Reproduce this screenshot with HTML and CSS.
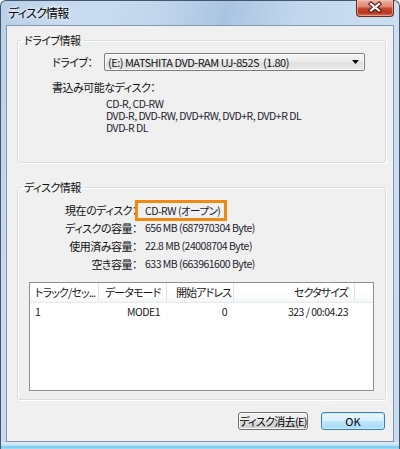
FILE: index.html
```html
<!DOCTYPE html>
<html lang="ja">
<head>
<meta charset="utf-8">
<title>ディスク情報</title>
<link rel="stylesheet" href="styles.css">
</head>
<body>
<div class="window">
  <div class="titlebar">
    <span class="title">ディスク情報</span>
    <div class="close">
      <svg width="38" height="17" viewBox="0 0 38 17">
        <path d="M15 5 L23 11.5 M23 5 L15 11.5" stroke="#5a1c12" stroke-width="4.4" stroke-linecap="square" fill="none"/>
        <path d="M15 5 L23 11.5 M23 5 L15 11.5" stroke="#ffffff" stroke-width="2.2" stroke-linecap="square" fill="none"/>
      </svg>
    </div>
  </div>
  <div class="client">
    <fieldset class="group g1">
      <legend>ドライブ情報</legend>
      <div class="drive-row">
        <span class="lbl">ドライブ：</span>
        <div class="combo">
          <span class="combo-text">(E:) MATSHITA DVD-RAM UJ-852S&nbsp;&nbsp;(1.80)</span>
          <svg class="combo-arrow" width="7" height="4" viewBox="0 0 7 4"><path d="M0 0 H7 L3.5 4 Z" fill="#000"/></svg>
        </div>
      </div>
      <div class="writable">書込み可能なディスク：</div>
      <div class="disc-list">
        <div>CD-R, CD-RW</div>
        <div>DVD-R, DVD-RW, DVD+RW, DVD+R, DVD+R DL</div>
        <div>DVD-R DL</div>
      </div>
    </fieldset>
    <fieldset class="group g2">
      <legend>ディスク情報</legend>
      <div class="info">
        <div class="k">現在のディスク：</div><div class="v"><span class="hl">CD-RW (オープン)</span></div>
        <div class="k">ディスクの容量：</div><div class="v">656 MB (687970304 Byte)</div>
        <div class="k">使用済み容量：</div><div class="v">22.8 MB (24008704 Byte)</div>
        <div class="k">空き容量：</div><div class="v">633 MB (663961600 Byte)</div>
      </div>
      <div class="listview">
        <div class="lv-head">
          <div class="c c1">トラック/セッ...</div>
          <div class="c c2 r">データモード</div>
          <div class="c c3">開始アドレス</div>
          <div class="c c4 r">セクタサイズ</div>
          <div class="c c5"></div>
        </div>
        <div class="lv-row">
          <div class="c c1">1</div>
          <div class="c c2 r">MODE1</div>
          <div class="c c3 r">0</div>
          <div class="c c4 r">323 / 00:04.23</div>
          <div class="c c5"></div>
        </div>
      </div>
    </fieldset>
    <div class="buttons">
      <button class="btn">ディスク消去(E)</button>
      <button class="btn ok">OK</button>
    </div>
  </div>
</div>
</body>
</html>
```
FILE: styles.css
```css
* { box-sizing: border-box; }
html, body { margin: 0; padding: 0; }
body {
  width: 400px;
  height: 449px;
  overflow: hidden;
  background: #fff;
  font-family: "Noto Sans CJK JP", "Noto Sans", sans-serif;
  font-feature-settings: "palt";
  font-size: 11px;
  letter-spacing: -0.5px;
  color: #1a1a1a;
}
.window {
  width: 400px;
  height: 449px;
  border: 1px solid #44566b;
  border-bottom: none;
  border-radius: 6px 6px 0 0;
  background:
    linear-gradient(to bottom, #d9e8f6 0, #cfe3f4 3px, #6fcbee 5px, #a9dcf2 7px) left bottom / 100% 7px no-repeat,
    linear-gradient(105deg, #b9d0e9 0%, #cadcf0 18%, #c0d5ec 32%, #a9c4e2 44%, #c2d7ed 58%, #cddff1 78%, #c8dbef 100%);
  display: flex;
  flex-direction: column;
  padding: 0 5px 7px 5px;
}
.titlebar {
  height: 24px;
  display: flex;
  justify-content: space-between;
  align-items: flex-start;
}
.title {
  padding-left: 2px;
  margin-top: 4px;
  font-size: 12px;
  line-height: 16px;
  letter-spacing: -0.8px;
  color: #000;
  text-shadow: 0 0 6px rgba(255,255,255,0.9), 0 0 3px rgba(255,255,255,0.9);
}
.close {
  width: 38px;
  height: 17px;
  margin-top: -1px;
  border: 1px solid #6a2a1e;
  border-top: none;
  border-radius: 0 0 4px 4px;
  background: linear-gradient(to bottom, #eab2a4 0%, #de8a76 40%, #c7492f 52%, #b7341c 78%, #d0705a 100%);
  box-shadow: inset 0 0 0 1px rgba(255,200,185,0.55);
  overflow: hidden;
}
.close svg { display: block; margin: -1px 0 0 -1px; }

.client {
  flex: 1;
  background: #f0f0f0;
  border: 1px solid #8499b0;
  padding: 7px 7px 0 10px;
  display: flex;
  flex-direction: column;
}
.group {
  margin: 0;
  padding: 0;
  border: 1px solid #d5dfe5;
  border-radius: 3px;
  box-shadow: inset 1px 1px 0 #fff, 1px 1px 0 #fff;
  min-width: 0;
}
.group legend {
  margin-left: 3px;
  padding: 0 3px;
  font-size: 11px;
  line-height: 14px;
  color: #111;
}
.g1 { padding: 0 0 28px 0; }
.drive-row {
  margin: 6px 0 0 34px;
  display: flex;
  align-items: center;
  height: 18px;
}
.lbl { width: 52px; color: #111; }
.combo {
  width: 261px;
  height: 18px;
  border: 1px solid #7c7c7c;
  border-radius: 2px;
  background: linear-gradient(to bottom, #f5f5f5 0%, #ececec 50%, #dfdfdf 51%, #e8e8e8 100%);
  display: flex;
  align-items: center;
  justify-content: space-between;
  padding: 0 5px 0 3px;
  box-shadow: inset 0 0 0 1px #fafafa;
}
.combo-text { line-height: 14px; color: #111; white-space: nowrap; }
.writable { margin: 9px 0 0 34px; line-height: 14px; color: #111; }
.disc-list {
  margin: 4px 0 0 88px;
  line-height: 12px;
  color: #1e1e2e;
  font-size: 10.5px;
}

.g2 {
  margin-top: 17px;
  padding: 0 0 8px 0;
  flex: none;
}
.info {
  margin-top: 7px;
  display: grid;
  grid-template-columns: 119px 1fr;
  column-gap: 8px;
  grid-auto-rows: 18px;
  align-items: center;
  line-height: 14px;
}
.k { text-align: right; color: #111; }
.v { color: #1e1e2e; font-size: 10.5px; white-space: nowrap; }
.hl {
  display: inline-block;
  margin: -3px 0 -3px -10px;
  border: 3px solid #f28a12;
  padding: 1px 4px 1px 7px;
  line-height: 13px;
}

.listview {
  margin: 9px 0 0 11px;
  width: 345px;
  height: 109px;
  border: 1px solid #8c9096;
  background: #fff;
}
.lv-head, .lv-row { display: flex; }
.lv-head {
  height: 20px;
  border-bottom: 1px solid #e5e8ec;
  background: linear-gradient(to bottom, #ffffff 0%, #ffffff 50%, #f4f6f7 100%);
}
.lv-head .c {
  border-right: 1px solid #e0e4e8;
  line-height: 19px;
  color: #1a1a1a;
  letter-spacing: -0.9px;
}
.lv-row { height: 18px; }
.lv-row .c { line-height: 18px; font-size: 10.5px; color: #1a1a1a; }
.c { padding: 0 6px; white-space: nowrap; overflow: hidden; }
.c1 { width: 69px; padding-left: 5px; }
.c2 { width: 68px; }
.c3 { width: 67px; padding-left: 9px; }
.c4 { width: 121px; }
.c5 { flex: 1; border-right: none !important; }
.lv-row .c { border-right: 1px solid transparent; }
.r { text-align: right; }

.buttons {
  margin-top: 12px;
  display: flex;
  justify-content: flex-end;
  gap: 13px;
  padding-right: 1px;
}
.btn {
  height: 18px;
  margin: 0;
  padding: 0;
  font-family: inherit;
  font-feature-settings: "palt";
  font-size: 11px;
  letter-spacing: -0.7px;
  line-height: 14px;
  white-space: nowrap;
  color: #000;
  border: 1px solid #707070;
  border-radius: 3px;
  background: linear-gradient(to bottom, #f2f2f2 0%, #ebebeb 49%, #dddddd 50%, #cfcfcf 100%);
  box-shadow: inset 0 0 0 1px #fbfbfb;
  width: 70px;
}
.ok {
  width: 64px;
  letter-spacing: 0;
  border-color: #3c7fb1;
  background: linear-gradient(to bottom, #eaf6fd 0%, #d9f0fc 49%, #bee6fd 50%, #a7d9f5 100%);
  box-shadow: inset 0 0 0 1px #c8ecfb;
}
```
